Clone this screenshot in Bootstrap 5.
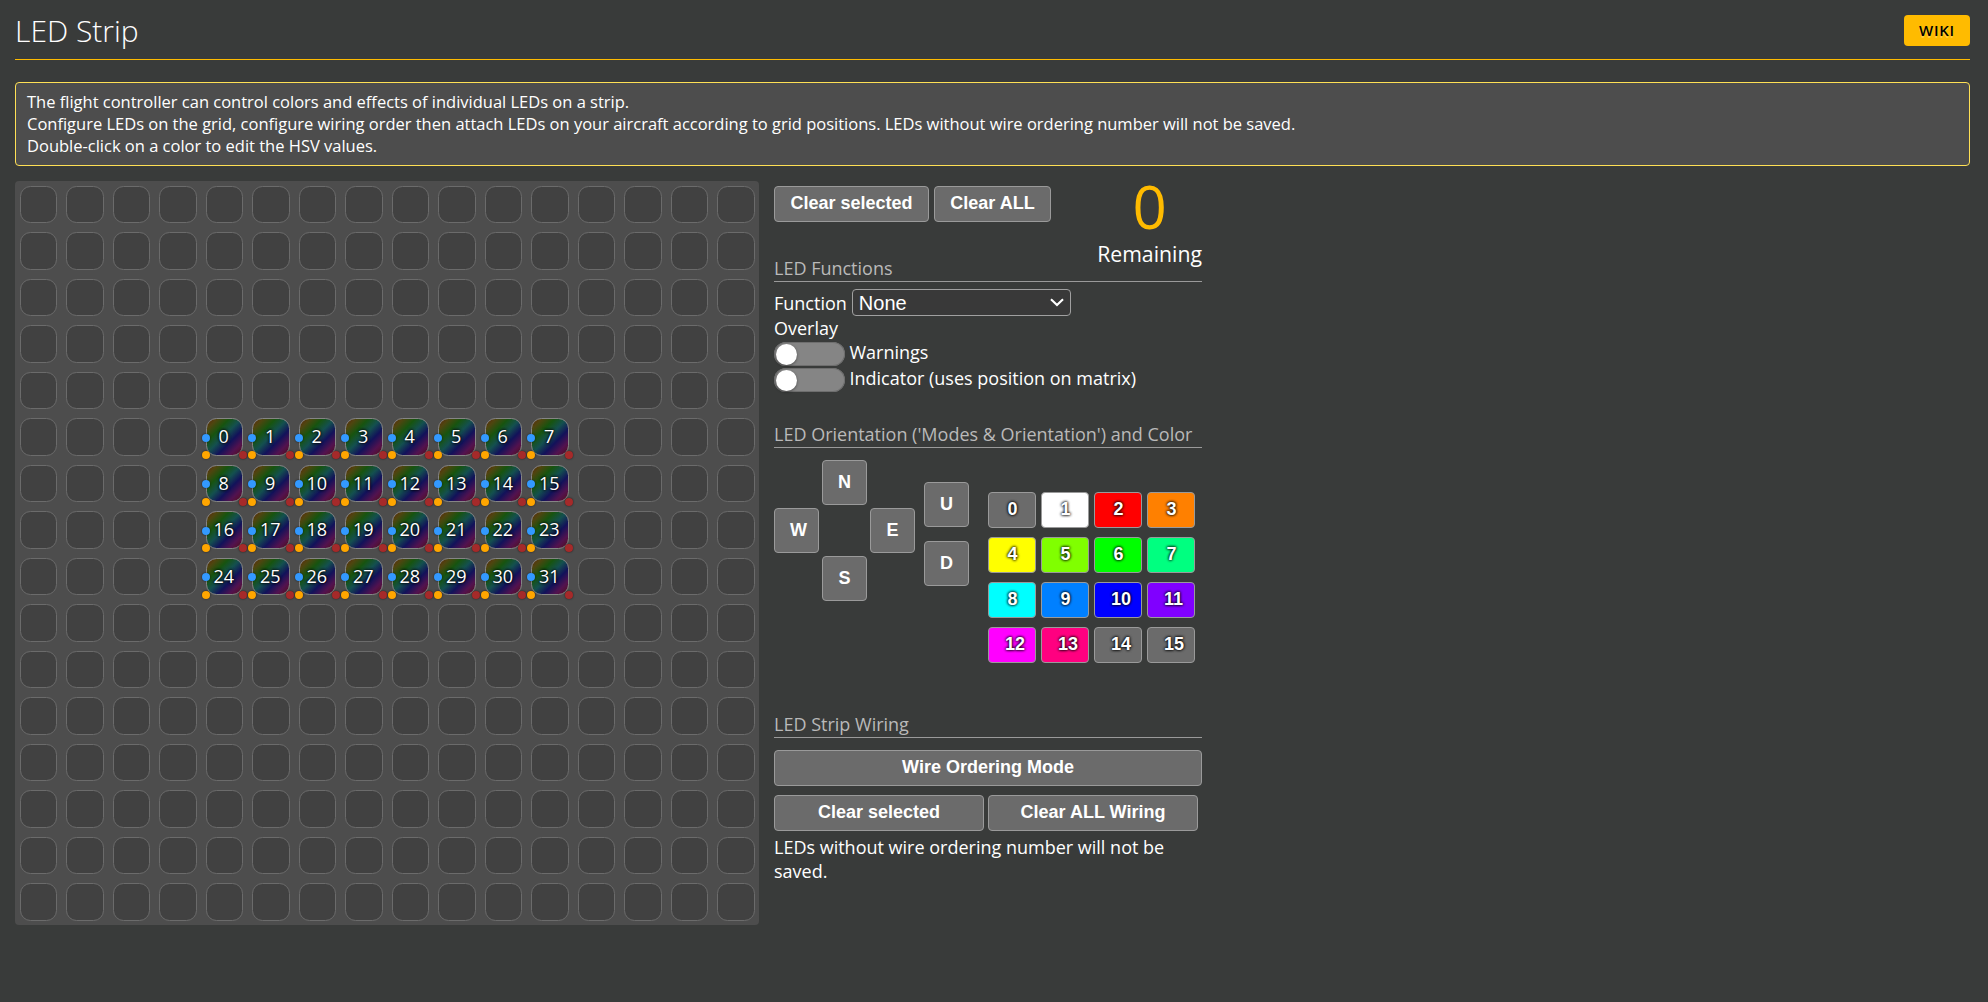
<!DOCTYPE html>
<html lang="en">
<head>
<meta charset="utf-8">
<title>LED Strip</title>
<link href="https://cdn.jsdelivr.net/npm/bootstrap@5.3.0/dist/css/bootstrap.min.css" rel="stylesheet">
<style>
body{background:#393b3a;color:#fff;font:18px/24px "Open Sans",sans-serif;height:1002px;overflow:hidden}
.page{padding:15px 18px 0 15px}
.head{height:45px;border-bottom:1px solid #ffbb00}
.head h1{font-size:30px;font-weight:300;line-height:31px;margin:0}
.wiki{width:66px;height:31px;border-radius:4px;background:#fb0;border:0;color:#000;font:600 15px/29px "Open Sans",sans-serif;letter-spacing:.75px;padding:0 0 1px;text-shadow:0 1.5px rgba(255,255,255,.25)}
.info{margin-top:22px;border:1px solid #ffe055;border-radius:4px;background:#4d4d4d;padding:8px 11px;font-size:16.5px;line-height:22px;height:84px;letter-spacing:-.008px}
.board{width:744px;height:744px;background:#4d4d4d;border-radius:4px;display:grid;grid-template-columns:repeat(16,37.5px);grid-auto-rows:37.5px;gap:9px;padding:4.5px;flex:none}
.cell{position:relative;border:1px solid #6b6b6b;border-radius:10.5px;background:#414141}
.cell.on{border-color:#858585;background:linear-gradient(135deg,#5a2a0d 2%,#4f450f 14%,#17540f 31%,#14504f 48%,#12125a 65%,#52124f 82%,#551020 98%);text-align:center;line-height:35.5px;padding-right:1px;text-shadow:0 0 3px #000,0 0 3px #000}
.dot{position:absolute;width:8px;height:8px;border-radius:50%;box-shadow:0 0 2px rgba(0,0,0,.7)}
.dot.o{background:#ffa600;left:-5px;bottom:-4.5px}
.dot.b{background:#39f;left:-5px;top:14.5px}
.dot.r{background:#a52a2a;right:-5px;bottom:-4.5px}
.panel{width:428px;padding-top:5px}
.tools{height:70px}
.b0{height:36px;border:1px solid #9a9a9a;border-radius:4px;background:#6b6b6b;color:#fff;font:700 18px/32px "Liberation Sans",Arial,sans-serif;padding:0 15px 2px;white-space:nowrap}
.sq{width:45px;height:45px;line-height:42px;padding-bottom:1px}
.left{text-align:center;font-size:21.25px;line-height:25px}
.left b{display:block;font-weight:400;font-size:60px;line-height:40px;color:#fb0;margin-bottom:15px}
.sec{font-size:18px;font-weight:400;line-height:24px;color:#b9b9b9;margin:0;padding-bottom:1px;border-bottom:1px solid #9a9a9a}
.funcs{height:140px;padding-top:7px}
.fn{height:27px;line-height:28px}
.fn .form-select{width:219px;height:27px;margin-left:5px;padding:0 24px 0 6px;border:1px solid #a0a0a0;border-radius:4px;color:#fff;background-color:#393939;font:20px/24px "Liberation Sans",Arial,sans-serif;background-image:url("data:image/svg+xml,%3Csvg xmlns='http://www.w3.org/2000/svg' viewBox='0 0 14 9'%3E%3Cpath d='M1 1.3l6 5.7 6-5.7' fill='none' stroke='%23fff' stroke-width='2.2'/%3E%3C/svg%3E");background-size:14px 9px;background-position:right 6px top 8px}
.sw{height:26px}
.sw .lbl{line-height:21px}
.track{width:71px;height:24px;border-radius:12px;background:#858585;box-shadow:inset 0 0 0 1px #6e6e6e;padding:1.5px 2px;margin-right:4.5px}
.track i{display:block;width:21px;height:21px;border-radius:50%;background:#fff;box-shadow:0 1px 3px rgba(0,0,0,.4)}
.orient{height:264px;padding-top:12px}
.compass{display:grid;grid-template-columns:repeat(3,45px);grid-auto-rows:45px;gap:3px}
.ud{gap:14px;padding-top:22px;margin-left:9px}
.pal{display:grid;grid-template-columns:repeat(4,48px);grid-auto-rows:36px;gap:9px 5px;margin-left:19px;padding-top:32px}
.pal .b0{padding-left:16px;text-shadow:0 0 3px #000,0 0 3px #000}
.wiring{padding-top:12px}
</style>
</head>
<body>
<main class="page">
<header class="head d-flex justify-content-between align-items-start"><h1>LED Strip</h1><button class="wiki">WIKI</button></header>
<div class="info">The flight controller can control colors and effects of individual LEDs on a strip.<br>Configure LEDs on the grid, configure wiring order then attach LEDs on your aircraft according to grid positions. LEDs without wire ordering number will not be saved.<br>Double-click on a color to edit the HSV values.</div>
<div class="d-flex" style="gap:15px;margin-top:15px">
<div class="board" id="board"></div>
<section class="panel">
<div class="tools d-flex justify-content-between align-items-start">
<div class="d-flex" style="gap:5px"><button class="b0" style="width:155px">Clear selected</button><button class="b0" style="width:117px">Clear ALL</button></div>
<div class="left"><b>0</b>Remaining</div>
</div>
<h2 class="sec">LED Functions</h2>
<div class="funcs">
<div class="fn d-flex"><span>Function</span><select class="form-select"><option>None</option></select></div>
<div style="height:26px">Overlay</div>
<div class="sw d-flex"><span class="track"><i></i></span><span class="lbl">Warnings</span></div>
<div class="sw d-flex"><span class="track"><i></i></span><span class="lbl">Indicator (uses position on matrix)</span></div>
</div>
<h2 class="sec">LED Orientation ('Modes &amp; Orientation') and Color</h2>
<div class="orient d-flex align-items-start">
<div class="compass"><span></span><button class="b0 sq">N</button><span></span><button class="b0 sq">W</button><span></span><button class="b0 sq">E</button><span></span><button class="b0 sq">S</button></div>
<div class="ud d-flex flex-column"><button class="b0 sq">U</button><button class="b0 sq">D</button></div>
<div class="pal" id="palette"></div>
</div>
<h2 class="sec">LED Strip Wiring</h2>
<div class="wiring">
<button class="b0 w-100 d-block">Wire Ordering Mode</button>
<div class="d-flex" style="gap:4px;margin-top:9px"><button class="b0" style="width:210px">Clear selected</button><button class="b0" style="width:210px">Clear ALL Wiring</button></div>
<p class="m-0" style="padding-top:4px">LEDs without wire ordering number will not be saved.</p>
</div>
</section>
</div>
</main>
<script src="https://cdn.jsdelivr.net/npm/bootstrap@5.3.0/dist/js/bootstrap.bundle.min.js"></script>
<script>
const board = document.getElementById('board');
for (let y = 0; y < 16; y++) for (let x = 0; x < 16; x++) {
  const c = document.createElement('div');
  c.className = 'cell';
  if (y >= 5 && y < 9 && x >= 4 && x < 12) {
    c.classList.add('on');
    c.innerHTML = ((y - 5) * 8 + x - 4) + '<i class="dot r"></i><i class="dot o"></i><i class="dot b"></i>';
  }
  board.append(c);
}
const colors = ['#6b6b6b','#fff','#f00','#ff8000','#ff0','#80ff00','#0f0','#00ff80','#0ff','#0080ff','#00f','#8000ff','#f0f','#ff0080','#6b6b6b','#6b6b6b'];
colors.forEach((c, i) => {
  const b = document.createElement('button');
  b.className = 'b0';
  b.style.background = c;
  b.textContent = i;
  document.getElementById('palette').append(b);
});
</script>
</body>
</html>
